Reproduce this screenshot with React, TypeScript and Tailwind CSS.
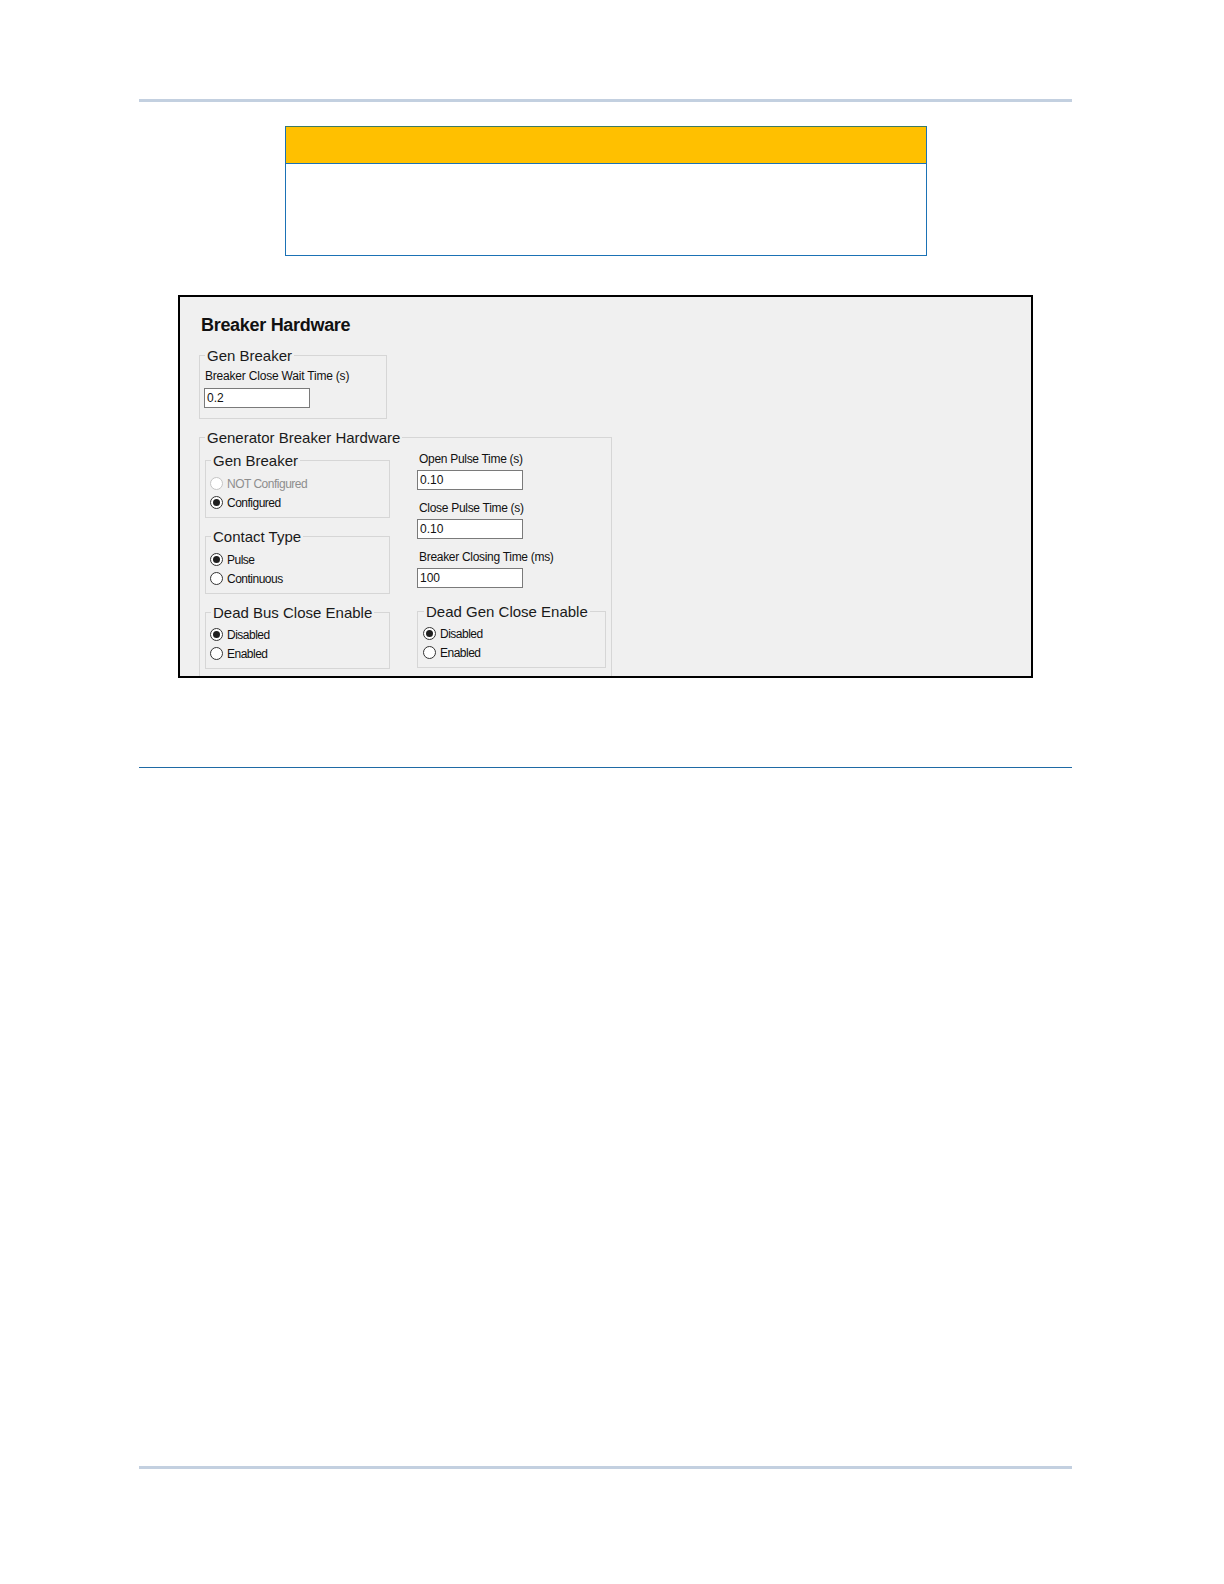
import React from "react";

const FONT = "font-['Liberation_Sans','Arial',sans-serif]";

function Radio({ label, checked, disabled, pad = "pl-[4px]" }: { label: string; checked?: boolean; disabled?: boolean; pad?: string }) {
  return (
    <div className={`flex h-[19px] items-center gap-[4px] ${pad}`}>
      <span
        className={`flex h-[13px] w-[13px] items-center justify-center rounded-full border bg-white ${
          disabled ? "border-[#c4c4c4]" : "border-[#333333]"
        }`}
      >
        {checked && <span className="h-[7px] w-[7px] rounded-full bg-[#1f1f1f]" />}
      </span>
      <span className={`text-[12px] leading-[14px] tracking-[-0.5px] ${disabled ? "text-[#8e8e8e]" : "text-[#111111]"}`}>
        {label}
      </span>
    </div>
  );
}

function Group({
  title,
  className,
  legendClass = "ml-[5px]",
  children,
}: {
  title: string;
  className?: string;
  legendClass?: string;
  children: React.ReactNode;
}) {
  return (
    <fieldset className={`border border-[#d6d6d6] ${className ?? ""}`}>
      <legend className={`px-[2px] text-[15px] leading-[17px] text-[#1a1a1a] ${legendClass}`}>{title}</legend>
      {children}
    </fieldset>
  );
}

function Field({ label, value, first }: { label: string; value: string; first?: boolean }) {
  return (
    <div className={first ? "" : "mt-[11px]"}>
      <div className="pl-[2px] text-[12px] leading-[14px] tracking-[-0.3px] text-[#111111]">{label}</div>
      <div className="mt-[4px] flex h-[20px] w-[106px] items-center border border-[#7a7a7a] bg-white pl-[2px] text-[12px] text-[#111111]">
        {value}
      </div>
    </div>
  );
}

export default function App() {
  return (
    <div className={`flex flex-col bg-white pb-[110px] ${FONT}`}>
      {/* header rule */}
      <div className="ml-[139px] mt-[99px] h-[3px] w-[933px] bg-[#c3d0e0]" />

      {/* caution box */}
      <div className="ml-[285px] mt-[24px] flex h-[130px] w-[642px] flex-col border border-[#1b72b5] border-t-[#3e7a62]">
        <div className="h-[37px] border-b border-[#1b72b5] bg-[#ffc000]" />
        <div className="flex-1 bg-white" />
      </div>

      {/* screenshot */}
      <div className="ml-[178px] mt-[39px] h-[383px] w-[855px] overflow-hidden border-2 border-black bg-[#f0f0f0]">
        <div className="ml-[21px] mt-[18px] text-[18px] font-bold leading-[20px] tracking-[-0.3px] text-[#111111]">
          Breaker Hardware
        </div>

        <Group title="Gen Breaker" className="ml-[19px] mt-[12px] w-[188px] pb-[10px]" legendClass="ml-[5px]">
          <div className="mt-[5px] pl-[5px] text-[12px] leading-[14px] tracking-[-0.2px] text-[#111111]">
            Breaker Close Wait Time (s)
          </div>
          <div className="ml-[4px] mt-[5px] flex h-[20px] w-[106px] items-center border border-[#7a7a7a] bg-white pl-[2px] text-[12px] text-[#111111]">
            0.2
          </div>
        </Group>

        <Group title="Generator Breaker Hardware" className="ml-[19px] mt-[10px] w-[413px] pb-[40px]" legendClass="ml-[5px]">
          <div className="flex gap-[27px] pl-[5px]">
            <div className="flex w-[185px] flex-col">
              <Group title="Gen Breaker" className="mt-[6px] pb-[5px]">
                <div className="mt-[5px]">
                  <Radio label="NOT Configured" disabled />
                  <Radio label="Configured" checked />
                </div>
              </Group>
              <Group title="Contact Type" className="mt-[10px] pb-[5px]">
                <div className="mt-[5px]">
                  <Radio label="Pulse" checked />
                  <Radio label="Continuous" />
                </div>
              </Group>
              <Group title="Dead Bus Close Enable" className="mt-[10px] pb-[5px]">
                <div className="mt-[4px]">
                  <Radio label="Disabled" checked />
                  <Radio label="Enabled" />
                </div>
              </Group>
            </div>

            <div className="flex flex-col pt-[6px]">
              <Field label="Open Pulse Time (s)" value="0.10" first />
              <Field label="Close Pulse Time (s)" value="0.10" />
              <Field label="Breaker Closing Time (ms)" value="100" />
              <Group title="Dead Gen Close Enable" className="mt-[15px] w-[189px] pb-[5px]" legendClass="ml-[6px]">
                <div className="mt-[4px]">
                  <Radio label="Disabled" checked pad="pl-[5px]" />
                  <Radio label="Enabled" pad="pl-[5px]" />
                </div>
              </Group>
            </div>
          </div>
        </Group>
      </div>

      {/* section rule */}
      <div className="ml-[139px] mt-[89px] h-px w-[933px] bg-[#1f6aa5]" />

      {/* footer rule */}
      <div className="ml-[139px] mt-[698px] h-[3px] w-[933px] bg-[#c3d0e0]" />
    </div>
  );
}
